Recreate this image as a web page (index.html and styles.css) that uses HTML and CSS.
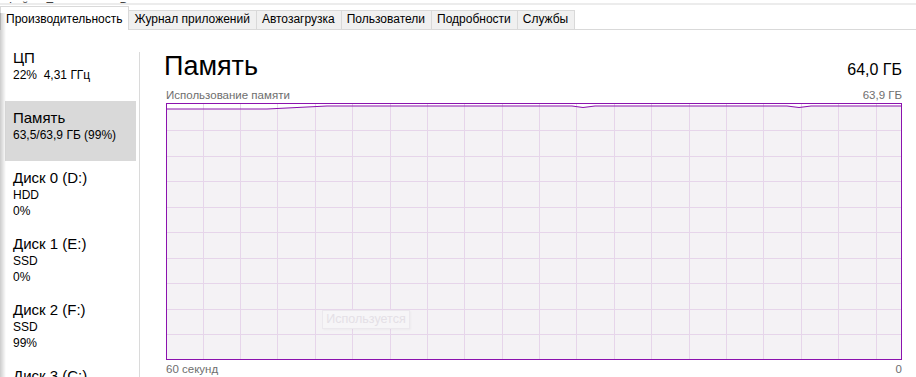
FILE: index.html
```html
<!DOCTYPE html>
<html>
<head>
	<title>Диспетчер задач</title>
	<link rel="stylesheet" href="styles.css">
</head>
<body>
	<div class="menubar"><span>Файл</span><span>Параметры</span><span>Вид</span></div>

	<div class="tabs">
		<div class="tab active">Производительность</div>
		<div class="tab">Журнал приложений</div>
		<div class="tab">Автозагрузка</div>
		<div class="tab">Пользователи</div>
		<div class="tab">Подробности</div>
		<div class="tab">Службы</div>
	</div>

	<div class="content">
		<div class="sidebar">
			<div class="item">
				<div class="item-title">ЦП</div>
				<div class="item-sub">22%&nbsp; 4,31 ГГц</div>
			</div>
			<div class="item selected">
				<div class="item-title">Память</div>
				<div class="item-sub">63,5/63,9 ГБ (99%)</div>
			</div>
			<div class="item">
				<div class="item-title">Диск 0 (D:)</div>
				<div class="item-sub">HDD</div>
				<div class="item-sub">0%</div>
			</div>
			<div class="item">
				<div class="item-title">Диск 1 (E:)</div>
				<div class="item-sub">SSD</div>
				<div class="item-sub">0%</div>
			</div>
			<div class="item">
				<div class="item-title">Диск 2 (F:)</div>
				<div class="item-sub">SSD</div>
				<div class="item-sub">99%</div>
			</div>
			<div class="item">
				<div class="item-title">Диск 3 (C:)</div>
				<div class="item-sub">SSD</div>
				<div class="item-sub">1%</div>
			</div>
		</div>

		<div class="divider"></div>

		<div class="main">
			<div class="head">
				<div class="head-title">Память</div>
				<div class="head-total">64,0 ГБ</div>
			</div>
			<div class="labels">
				<span>Использование памяти</span>
				<span>63,9 ГБ</span>
			</div>

			<!-- memory usage graph, last 60 seconds -->
			<div class="graph">
				<svg width="734" height="255" viewBox="0 0 734 255">
					<rect x="0" y="0" width="734" height="255" fill="#ffffff"/>
					<polygon fill="#f4f2f5" points="0,255 0,5 100,5 140,3 160,2 405,2 416,3.5 428,2 620,2 632,3.5 644,2 734,2 734,255"/>
					<path stroke="#e6d5ea" stroke-width="1" fill="none" d="M36.5 0V255 M73.5 0V255 M110.5 0V255 M148.5 0V255 M185.5 0V255 M223.5 0V255 M260.5 0V255 M297.5 0V255 M335.5 0V255 M372.5 0V255 M409.5 0V255 M447.5 0V255 M484.5 0V255 M522.5 0V255 M559.5 0V255 M596.5 0V255 M634.5 0V255 M671.5 0V255 M709.5 0V255 M0 26.5H734 M0 52.5H734 M0 77.5H734 M0 103.5H734 M0 128.5H734 M0 154.5H734 M0 179.5H734 M0 205.5H734 M0 230.5H734"/>
					<polyline fill="none" stroke="#8b12ae" stroke-width="1.2" points="0,5 100,5 140,3 160,2 405,2 416,3.5 428,2 620,2 632,3.5 644,2 734,2"/>
				</svg>
				<div class="ghost">Используется</div>
			</div>

			<div class="labels bottom">
				<span>60 секунд</span>
				<span>0</span>
			</div>
		</div>
	</div>
</body>
</html>
```

FILE: styles.css
```css
body {
	margin: 0;
	height: 377px;
	overflow: hidden;
	background-color: #ffffff;
	font-family: "Liberation Sans", Arial, sans-serif;
	color: #000000;
}

/* soft shadow along the left window edge */
body::before {
	content: "";
	position: fixed;
	top: 13px;
	bottom: 0;
	left: 0;
	width: 6px;
	background: linear-gradient(to right, rgba(0,0,0,0.2), rgba(0,0,0,0));
	z-index: 5;
}

.menubar {
	height: 3px;
	overflow: hidden;
	border-bottom: 2px solid #ececec;
	font-size: 12px;
	line-height: 14px;
	padding-left: 6px;
}

.menubar span {
	display: inline-block;
	margin-top: -12px;
	margin-right: 10px;
	color: #444444;
}

.tabs {
	display: flex;
	align-items: flex-end;
	height: 24px;
	border-bottom: 1px solid #d9d9d9;
}

.tab {
	height: 18px;
	padding: 0 6px 0 5px;
	font-size: 12px;
	line-height: 17px;
	background-color: #f0f0f0;
	border: 1px solid #d9d9d9;
	border-bottom: none;
	border-left: none;
	white-space: nowrap;
}

.tab.active {
	height: 23px;
	margin-bottom: -1px;
	padding: 0 6px 0 5px;
	line-height: 24px;
	background-color: #ffffff;
	border-left: 1px solid #d9d9d9;
}

.content {
	display: flex;
	height: 347px;
}

.sidebar {
	width: 136px;
	padding-top: 11px;
	flex-shrink: 0;
}

.item {
	box-sizing: border-box;
	min-height: 60px;
	margin-left: 5px;
	padding: 8px 0 8px 8px;
}

.item.selected {
	background-color: #d9d9d9;
}

.item-title {
	font-size: 15px;
	line-height: 18px;
}

.item-sub {
	font-size: 12px;
	line-height: 16px;
}

.divider {
	width: 1px;
	margin: 22px 0 0 3px;
	background-color: #dadada;
	flex-shrink: 0;
}

.main {
	flex: 1;
	padding: 19px 14px 0 26px;
}

.head {
	display: flex;
	justify-content: space-between;
	align-items: baseline;
}

.head-title {
	font-size: 27px;
	line-height: 34px;
	margin-left: -2px;
}

.head-total {
	font-size: 16px;
}

.labels {
	display: flex;
	justify-content: space-between;
	margin-top: 5px;
	font-size: 11.5px;
	line-height: 14px;
	color: #6e6e6e;
}

.labels.bottom {
	margin-top: 2px;
}

.graph {
	position: relative;
	margin-top: 1px;
	width: 734px;
	height: 255px;
	border: 1px solid #8b12ae;
}

.graph svg {
	display: block;
}

.ghost {
	position: absolute;
	left: 155px;
	top: 206px;
	width: 86px;
	height: 17px;
	border: 1px solid #ebe8ed;
	background-color: #f6f5f7;
	box-shadow: 1px 1px 2px rgba(0,0,0,0.03);
	color: #e4e0e6;
	font-size: 12.5px;
	line-height: 17px;
	text-align: center;
}
```
